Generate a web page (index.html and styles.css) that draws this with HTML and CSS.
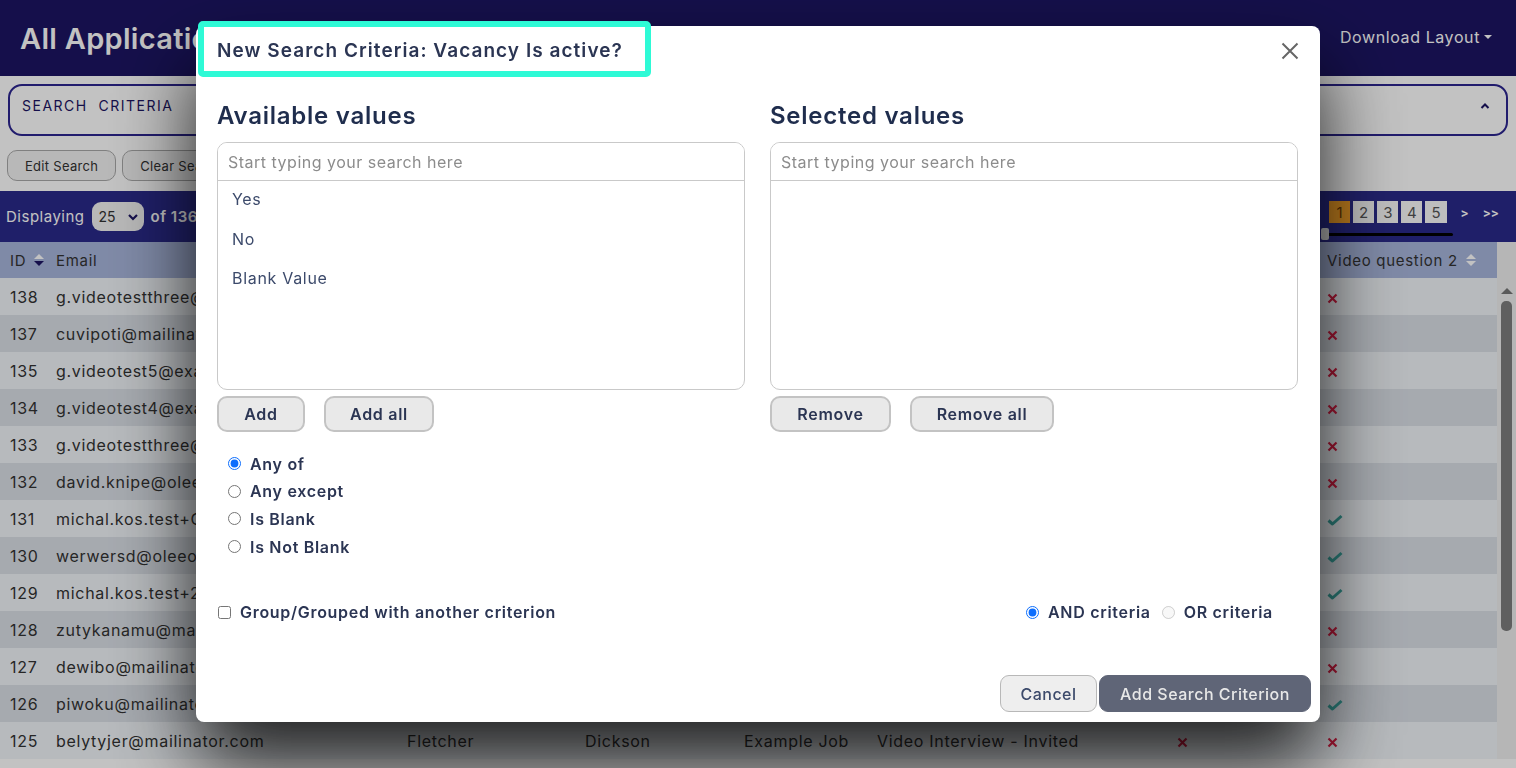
FILE: index.html
```html
<!DOCTYPE html>
<html lang="en">

<head>
    <meta charset="UTF-8">
    <meta name="viewport" content="width=device-width, initial-scale=1.0">
    <title>All Applications</title>
    <link rel="stylesheet" href="styles.css">
</head>

<body>
    <header class="topbar">
        <h1>All Applications</h1>
        <div class="download">Download Layout <span class="caret"></span></div>
    </header>

    <section class="criteria">
        <span>SEARCH&nbsp; CRITERIA</span>
        <svg width="10" height="8" viewBox="0 0 10 8"><path d="M1.5 6 L5 2.5 L8.5 6" fill="none" stroke="#1c1563" stroke-width="2"/></svg>
    </section>

    <div class="actions">
        <button>Edit Search</button>
        <button>Clear Search</button>
    </div>

    <div class="results-bar">
        <div class="displaying">
            Displaying
            <span class="page-size">25
                <svg width="12" height="8" viewBox="0 0 12 8"><path d="M2 2 L6 6 L10 2" fill="none" stroke="#1c1563" stroke-width="2.2"/></svg>
            </span>
            <b>of 136 applications</b>
        </div>
        <div class="pager">
            <div class="pages">
                <span class="current">1</span><span>2</span><span>3</span><span>4</span><span>5</span>
                <em>&gt;</em><em>&gt;&gt;</em>
            </div>
            <div class="slider"><i></i></div>
        </div>
    </div>

    <div class="table-wrap">
        <table>
            <thead>
                <tr>
                    <th class="c-id">ID <span class="sort"></span></th>
                    <th class="c-email">Email</th>
                    <th class="c-first">First name</th>
                    <th class="c-last">Last name</th>
                    <th class="c-job">Vacancy</th>
                    <th class="c-status">Status</th>
                    <th class="c-q1">Video question 1</th>
                    <th class="c-q2">Video question 2 <span class="sort"></span></th>
                </tr>
            </thead>
            <tbody id="rows"></tbody>
        </table>
        <div class="scrollbar"><span class="arrow"></span><span class="thumb"></span></div>
    </div>

    <div class="backdrop"></div>

    <div class="modal-wrap">
        <div class="modal">
            <h2 class="modal-title">New Search Criteria: Vacancy Is active?</h2>
            <button class="close" aria-label="Close">
                <svg width="18" height="18" viewBox="0 0 18 18"><path d="M1.5 1.5 L16.5 16.5 M16.5 1.5 L1.5 16.5" stroke="#666" stroke-width="2"/></svg>
            </button>

            <div class="columns">
                <div class="column">
                    <h3>Available values</h3>
                    <div class="listbox">
                        <input placeholder="Start typing your search here">
                        <ul>
                            <li>Yes</li>
                            <li>No</li>
                            <li>Blank Value</li>
                        </ul>
                    </div>
                    <div class="list-buttons">
                        <button class="btn-add">Add</button>
                        <button class="btn-addall">Add all</button>
                    </div>
                </div>
                <div class="column">
                    <h3>Selected values</h3>
                    <div class="listbox">
                        <input placeholder="Start typing your search here">
                        <ul></ul>
                    </div>
                    <div class="list-buttons">
                        <button class="btn-remove">Remove</button>
                        <button class="btn-removeall">Remove all</button>
                    </div>
                </div>
            </div>

            <div class="match-type">
                <label><input type="radio" name="match" checked> Any of</label>
                <label><input type="radio" name="match"> Any except</label>
                <label><input type="radio" name="match"> Is Blank</label>
                <label><input type="radio" name="match"> Is Not Blank</label>
            </div>

            <div class="group-row">
                <label><input type="checkbox"> Group/Grouped with another criterion</label>
                <div class="join">
                    <label><input type="radio" name="join" checked> AND criteria</label>
                    <label class="disabled"><input type="radio" name="join" disabled> OR criteria</label>
                </div>
            </div>

            <div class="modal-footer">
                <button class="cancel">Cancel</button>
                <button class="primary">Add Search Criterion</button>
            </div>
        </div>
    </div>

    <script>
        const rows = [
            [138, 'g.videotestthree@example.com', 'George', 'Three', 'Example Job', 'Video Interview - Invited', 0, 0],
            [137, 'cuvipoti@mailinator.com', 'Cara', 'Potts', 'Example Job', 'Video Interview - Invited', 0, 0],
            [135, 'g.videotest5@example.com', 'George', 'Five', 'Example Job', 'Video Interview - Invited', 0, 0],
            [134, 'g.videotest4@example.com', 'George', 'Four', 'Example Job', 'Video Interview - Invited', 0, 0],
            [133, 'g.videotestthree@example.com', 'George', 'Three', 'Example Job', 'Video Interview - Invited', 0, 0],
            [132, 'david.knipe@oleeo.com', 'David', 'Knipe', 'Example Job', 'Video Interview - Invited', 0, 0],
            [131, 'michal.kos.test+Q1@oleeo.com', 'Michal', 'Kos', 'Example Job', 'Video Interview - Completed', 1, 1],
            [130, 'werwersd@oleeo.com', 'Werner', 'Sand', 'Example Job', 'Video Interview - Completed', 1, 1],
            [129, 'michal.kos.test+2@oleeo.com', 'Michal', 'Kos', 'Example Job', 'Video Interview - Completed', 1, 1],
            [128, 'zutykanamu@mailinator.com', 'Zuty', 'Kanamu', 'Example Job', 'Video Interview - Invited', 0, 0],
            [127, 'dewibo@mailinator.com', 'Dewi', 'Bo', 'Example Job', 'Video Interview - Invited', 0, 0],
            [126, 'piwoku@mailinator.com', 'Piwo', 'Ku', 'Example Job', 'Video Interview - Completed', 1, 1],
            [125, 'belytyjer@mailinator.com', 'Fletcher', 'Dickson', 'Example Job', 'Video Interview - Invited', 0, 0]
        ]

        const cross = '<svg class="ico" width="11" height="11" viewBox="0 0 11 11"><path d="M1.5 1.5 L9.5 9.5 M9.5 1.5 L1.5 9.5" stroke="#d81e43" stroke-width="2.2"/></svg>'
        const tick = '<svg class="ico" width="16" height="12" viewBox="0 0 16 12"><path d="M1.5 6.5 L5.5 10 L14.5 2" fill="none" stroke="#3aa6a0" stroke-width="3" stroke-linejoin="round"/></svg>'

        const $rows = document.getElementById('rows')
        rows.forEach(r => {
            const tr = document.createElement('tr')
            tr.innerHTML = `<td>${r[0]}</td><td>${r[1]}</td><td>${r[2]}</td><td>${r[3]}</td><td>${r[4]}</td><td>${r[5]}</td><td>${r[6] ? tick : cross}</td><td>${r[7] ? tick : cross}</td>`
            $rows.appendChild(tr)
        })
    </script>
</body>

</html>
```

FILE: styles.css
```css
body {
    font-family: 'Inter', 'Open Sans', sans-serif;
    letter-spacing: 0.7px;
    margin: 0;
    padding: 0;
    background: #ffffff;
    color: #333;
    overflow: hidden;
    height: 768px;
}

button {
    font-family: inherit;
    letter-spacing: inherit;
}

/* ---------- page behind the dialog ---------- */

.topbar {
    display: flex;
    justify-content: space-between;
    align-items: center;
    height: 76px;
    background: #1c1563;
    padding: 0 24px 0 20px;
    box-sizing: border-box;

    h1 {
        margin: 0;
        font-size: 29px;
        font-weight: 600;
        letter-spacing: 0.3px;
        color: #fff;
    }
}

.download {
    color: #fff;
    font-size: 16px;
    display: flex;
    align-items: center;
    gap: 4px;
    margin-bottom: 2px;
    letter-spacing: 0.6px;

    .caret {
        border-left: 4px solid transparent;
        border-right: 4px solid transparent;
        border-top: 4px solid #fff;
    }
}

.criteria {
    display: flex;
    justify-content: space-between;
    align-items: center;
    margin: 8px 8px 0 8px;
    height: 52px;
    border: 2px solid #2c2590;
    border-radius: 14px;
    box-sizing: border-box;
    padding: 0 16px 9px 12px;
    font-size: 14px;
    letter-spacing: 1.5px;
    color: #1c1563;
}

.actions {
    display: flex;
    gap: 6px;
    padding: 14px 7px 10px;

    button {
        height: 31px;
        padding: 0 17px;
        border: 1px solid #a9a9a9;
        border-radius: 10px;
        background: #f2f2f2;
        font-size: 13px;
        letter-spacing: 0.3px;
        color: #333;
    }
}

.results-bar {
    display: flex;
    justify-content: space-between;
    align-items: flex-start;
    height: 51px;
    background: #2a2a8a;
    color: #fff;
    padding: 0 12px 0 6px;
}

.displaying {
    display: flex;
    align-items: center;
    gap: 7px;
    height: 51px;
    font-size: 15px;
    letter-spacing: 0.5px;

    b {
        font-weight: 600;
    }
}

.page-size {
    display: flex;
    align-items: center;
    gap: 11px;
    height: 29px;
    padding: 0 5px 0 7px;
    border-radius: 9px;
    background: #f2f2f2;
    color: #333;
    font-size: 14px;
    letter-spacing: 0;
}

.pager {
    padding-top: 10px;
    width: 176px;
    margin-right: 5px;
}

.pages {
    display: flex;
    align-items: center;
    gap: 3px;
    padding-left: 6px;
    letter-spacing: 0;

    span {
        width: 22px;
        height: 22px;
        display: flex;
        align-items: center;
        justify-content: center;
        background: #fafafa;
        color: #555;
        font-size: 15px;
    }

    .current {
        background: #f5a127;
        color: #6a3a00;
    }

    em {
        font-style: normal;
        font-weight: 700;
        font-size: 12px;
        margin-left: 11px;
        color: #fff;
    }
}

.slider {
    margin: 10px 0 0 0;
    width: 130px;
    height: 3px;
    background: #000;
    border-radius: 2px;
    position: relative;

    i {
        position: absolute;
        left: -2px;
        top: -5px;
        width: 8px;
        height: 12px;
        background: #e6e6e6;
        border-radius: 2px;
    }
}

.table-wrap {
    display: flex;
}

table {
    border-collapse: collapse;
    width: 1497px;
    font-size: 16px;

    th {
        text-align: left;
        font-weight: 400;
        background: #a8b6dc;
        height: 36px;
        padding: 0 0 0 10px;
        color: #333;
        font-size: 15px;
    }

    td {
        height: 37px;
        padding: 0 0 0 10px;
        color: #333;
        white-space: nowrap;
    }

    tbody tr:nth-child(odd) td {
        background: #f1f5f9;
    }

    tbody tr:nth-child(even) td {
        background: #dbe0e7;
    }

    .c-id { width: 36px; }
    .c-email { width: 341px; }
    .c-first { width: 168px; }
    .c-last { width: 149px; }
    .c-job { width: 123px; }
    .c-status { width: 290px; }
    .c-q1 { width: 140px; }
}

.sort {
    display: inline-block;
    width: 0;
    height: 0;
    border-left: 5px solid transparent;
    border-right: 5px solid transparent;
    border-bottom: 5px solid #fff;
    position: relative;
    top: -7px;
    margin-left: 3px;

    &::after {
        content: '';
        position: absolute;
        left: -5px;
        top: 7px;
        border-left: 5px solid transparent;
        border-right: 5px solid transparent;
        border-top: 5px solid #1c1563;
    }
}

.c-q2 .sort::after {
    border-top-color: #fff;
}

.ico {
    vertical-align: middle;
}

.scrollbar {
    width: 19px;
    background: #f0f0f0;
    display: flex;
    flex-direction: column;
    align-items: center;
    padding-top: 46px;

    .arrow {
        border-left: 6px solid transparent;
        border-right: 6px solid transparent;
        border-bottom: 6px solid #777;
    }

    .thumb {
        margin-top: 7px;
        width: 11px;
        height: 330px;
        border-radius: 5px;
        background: #7e7e7e;
    }
}

/* ---------- dialog ---------- */

.backdrop {
    position: fixed;
    inset: 0;
    background: rgba(0, 0, 0, 0.24);
}

.modal-wrap {
    position: fixed;
    inset: 0;
    display: flex;
    justify-content: center;
    align-items: flex-start;
    padding-top: 26px;
}

.modal {
    position: relative;
    width: 1124px;
    height: 696px;
    box-sizing: border-box;
    background: #fff;
    border-radius: 8px;
    box-shadow: 0 40px 80px rgba(0, 0, 0, 0.85);
    padding: 0 22px 10px 21px;
    display: flex;
    flex-direction: column;
    color: #2b3553;
}

.modal-title {
    margin: -5px 0 0 -19px;
    width: 453px;
    height: 56px;
    box-sizing: border-box;
    border: 6px solid #2efad6;
    border-radius: 5px;
    background: #fff;
    padding: 3px 0 0 13px;
    display: flex;
    align-items: center;
    font-size: 19px;
    font-weight: 600;
    letter-spacing: 1.05px;
    color: #2b3553;
}

.close {
    position: absolute;
    top: 16px;
    right: 21px;
    background: none;
    border: 0;
    padding: 0;
}

.columns {
    display: flex;
    gap: 25px;
    margin-top: 24px;
}

.column {
    flex: 1;

    h3 {
        margin: 0 0 11px;
        font-size: 24px;
        line-height: 30px;
        font-weight: 600;
        letter-spacing: 0.75px;
        color: #1f2d4d;
    }
}

.listbox {
    height: 248px;
    border: 1px solid #c9c9c9;
    border-radius: 10px;
    box-sizing: border-box;
    display: flex;
    flex-direction: column;
    overflow: hidden;

    input {
        height: 37px;
        border: 0;
        border-bottom: 1px solid #c9c9c9;
        padding: 0 10px;
        font-family: inherit;
        font-size: 16px;
        letter-spacing: 0.5px;
        outline: none;

        &::placeholder {
            color: #8c8c8c;
        }
    }

    ul {
        list-style: none;
        margin: 0;
        padding: 0;
    }

    li {
        height: 39.5px;
        line-height: 37px;
        padding-left: 14px;
        font-size: 16px;
        color: #3c4a6b;
    }
}

.list-buttons {
    display: flex;
    gap: 19px;
    margin-top: 6px;

    button {
        height: 36px;
        background: #e9e9e9;
        border: 2px solid #c3c3c3;
        border-radius: 10px;
        font-size: 16px;
        font-weight: 600;
        color: #2b3553;
    }

    .btn-add { width: 88px; }
    .btn-addall { width: 110px; }
    .btn-remove { width: 121px; }
    .btn-removeall { width: 144px; }
}

.match-type {
    display: flex;
    flex-direction: column;
    margin: 18px 0 0 6px;

    label {
        display: flex;
        align-items: center;
        height: 27.6px;
        font-size: 16px;
        font-weight: 600;
        gap: 5px;
    }
}

input[type="radio"],
input[type="checkbox"] {
    accent-color: #0d6efd;
    margin: 0 4px 0 5px;
}

.group-row {
    display: flex;
    justify-content: space-between;
    align-items: center;
    margin-top: 40px;
    height: 24px;
    padding-right: 25px;
    font-size: 16px;
    font-weight: 600;

    label {
        display: flex;
        align-items: center;
        gap: 5px;
    }

    > label input {
        margin-left: 1px;
    }
}

.join {
    display: flex;
    gap: 6px;

    .disabled {
        color: #2b3553;
    }
}

.modal-footer {
    margin-top: auto;
    display: flex;
    justify-content: flex-end;
    gap: 2px;
    margin-right: -13px;

    button {
        height: 37px;
        border-radius: 9px;
        font-size: 16px;
        font-weight: 500;
        letter-spacing: 0.5px;
    }

    .cancel {
        width: 97px;
        background: #eeeeee;
        border: 1px solid #b8b8b8;
        color: #3c4a6b;
    }

    .primary {
        width: 212px;
        background: #5f6577;
        border: 1px solid #5f6577;
        color: #e8e8e8;
    }
}
```
